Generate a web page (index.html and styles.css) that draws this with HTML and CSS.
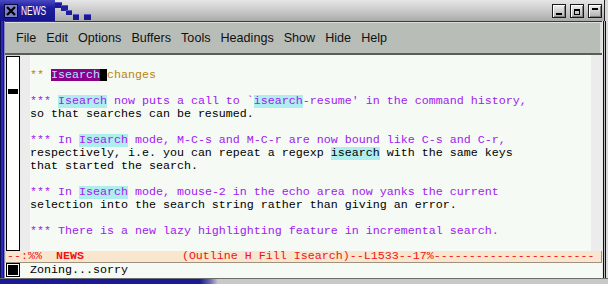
FILE: index.html
```html
<!DOCTYPE html>
<html lang="en">
<head>
    <meta charset="UTF-8">
    <title>NEWS - Emacs</title>
    <link rel="stylesheet" href="styles.css">
</head>
<body>
    <div class="window">
        <div class="titlebar">
            <div class="title-tab">
                <svg class="win-icon" width="14" height="14" viewBox="0 0 14 14">
                    <rect x="0.5" y="0.5" width="13" height="13" fill="#7c82c8" stroke="#0a0a40"/>
                    <path d="M3 3 L11 11 M11 3 L3 11" stroke="#000" stroke-width="2.2"/>
                </svg>
                <span class="title">NEWS</span>
            </div>
            <svg class="steps" width="40" height="21" viewBox="0 0 40 21">
                <rect x="0" y="2" width="7" height="6" fill="#1c1c9a"/>
                <rect x="6" y="5" width="7" height="6" fill="#22229e"/>
                <rect x="11" y="10" width="6" height="5" fill="#1c1c96"/>
                <rect x="18" y="14" width="6" height="6" fill="#1a1a90"/>
                <rect x="29" y="14" width="7" height="6" fill="#1a1a90"/>
                <rect x="0" y="2" width="7" height="1" fill="#5858c8"/>
                <rect x="6" y="5" width="7" height="1" fill="#5858c8"/>
                <rect x="11" y="10" width="6" height="1" fill="#5858c8"/>
                <rect x="18" y="14" width="6" height="1" fill="#5858c8"/>
                <rect x="29" y="14" width="7" height="1" fill="#5858c8"/>
            </svg>
            <div class="title-fill"></div>
            <div class="wbtns">
                <span class="wbtn"><span class="ico-min"></span></span>
                <span class="wbtn"><span class="ico-max"></span></span>
                <span class="wbtn"><span class="ico-shade"></span></span>
            </div>
        </div>
        <div class="frame">
            <div class="frame-left"></div>
            <div class="frame-body">
                <div class="menubar">
                    <span>File</span>
                    <span>Edit</span>
                    <span>Options</span>
                    <span>Buffers</span>
                    <span>Tools</span>
                    <span>Headings</span>
                    <span>Show</span>
                    <span>Hide</span>
                    <span>Help</span>
                </div>
                <div class="editor">
                    <div class="scrollbar"><div class="thumb"></div></div>
                    <div class="fringe"></div>
                    <div class="buffer">
                        <div class="ln"> </div>
                        <div class="ln h">** <span class="isr">Isearch</span><span class="cur"> </span>changes</div>
                        <div class="ln"> </div>
                        <div class="ln p">*** <span class="lz">Isearch</span> now puts a call to `<span class="lz">isearch</span>-resume' in the command history,</div>
                        <div class="ln">so that searches can be resumed.</div>
                        <div class="ln"> </div>
                        <div class="ln p">*** In <span class="lz">Isearch</span> mode, M-C-s and M-C-r are now bound like C-s and C-r,</div>
                        <div class="ln">respectively, i.e. you can repeat a regexp <span class="lz">isearch</span> with the same keys</div>
                        <div class="ln">that started the search.</div>
                        <div class="ln"> </div>
                        <div class="ln p">*** In <span class="lz">Isearch</span> mode, mouse-2 in the echo area now yanks the current</div>
                        <div class="ln">selection into the search string rather than giving an error.</div>
                        <div class="ln"> </div>
                        <div class="ln p">*** There is a new lazy highlighting feature in incremental search.</div>
                    </div>
                    <div class="fringe fringe-right"></div>
                </div>
                <div class="modeline">--:%%  <b>NEWS</b>              (Outline H Fill Isearch)--L1533--17%-----------------------</div>
                <div class="minibuf">
                    <div class="mbox"><div class="mbox-fill"></div></div>
                    <div class="mtext">Zoning...sorry</div>
                </div>
            </div>
            <div class="frame-right"></div>
        </div>
        <div class="frame-bottom"></div>
    </div>
</body>
</html>
```

FILE: styles.css
```css
body {
    margin: 0;
    background: #e0e0e0;
    overflow: hidden;
}
.window {
    width: 608px;
    height: 284px;
    display: flex;
    flex-direction: column;
}

/* title bar */
.titlebar {
    height: 21px;
    flex-shrink: 0;
    display: flex;
    background: linear-gradient(#e6e6e6, #c4c4c4 60%, #aaaaaa);
    box-shadow: inset -3px 0 0 #d8d8d8, inset -4px 0 0 #202020;
}
.title-tab {
    width: 55px;
    flex-shrink: 0;
    display: flex;
    align-items: center;
    background: linear-gradient(#4a4ac4, #1e1ea2 35%, #14148a);
}
.win-icon {
    margin-left: 4px;
    flex-shrink: 0;
}
.title {
    display: inline-block;
    margin-left: 3px;
    color: #fff;
    font-family: "Liberation Sans", sans-serif;
    font-size: 12px;
    transform: scaleX(0.7);
    transform-origin: left center;
}
.steps {
    flex-shrink: 0;
}
.title-fill {
    flex: 1;
}
.wbtns {
    display: flex;
    gap: 4px;
    padding: 4px 6px 0 0;
}
.wbtn {
    width: 12px;
    height: 12px;
    border: 1px solid #1a1a1a;
    background: linear-gradient(#f0f0f0, #b0b0b0);
    box-shadow: inset 1px 1px 0 #fff, inset -1px -1px 0 #808080;
    position: relative;
}
.ico-min {
    position: absolute;
    left: 3px;
    top: 8px;
    width: 6px;
    height: 2px;
    background: #000;
}
.ico-max {
    position: absolute;
    left: 3px;
    top: 4px;
    width: 4px;
    height: 3px;
    border: 1px solid #000;
    border-top-width: 2px;
}
.ico-shade {
    position: absolute;
    left: 3px;
    top: 3px;
    width: 6px;
    height: 2px;
    background: #000;
}

/* frame */
.frame {
    flex: 1;
    min-height: 0;
    display: flex;
}
.frame-left {
    width: 5px;
    flex-shrink: 0;
    background: linear-gradient(to right, #0c0c50 0 1px, #2a2ac0 1px 3px, #14148a 3px 4px, #8888b8 4px);
}
.frame-right {
    width: 6px;
    flex-shrink: 0;
    background: linear-gradient(to right, #e8e8e8 0 1px, #111 1px 2px, #bdbdbd 2px 3px, #111 3px 4px, #dcdcdc 4px);
}
.frame-body {
    flex: 1;
    min-width: 0;
    display: flex;
    flex-direction: column;
    background: #d6d6d6;
}
.frame-bottom {
    height: 5px;
    flex-shrink: 0;
    border-top: 1px solid #6c6c6c;
    background: linear-gradient(to right, #1a1a96 0, #1a1a96 200px, #6a6ab0 210px, #c8c8c8 218px);
}

/* menu bar */
.menubar {
    height: 31px;
    flex-shrink: 0;
    display: flex;
    align-items: center;
    gap: 10px;
    padding-left: 11px;
    background: #b9bdb8;
    border-top: 1px solid #3a3a3a;
    border-bottom: 2px solid #5a5c5a;
    box-shadow: inset 0 1px 0 #dcdedc, inset -2px 0 0 #dcdedc;
    font-family: "Liberation Sans", sans-serif;
    font-size: 12.6px;
    color: #111;
}

/* editor window */
.editor {
    height: 196px;
    flex-shrink: 0;
    display: flex;
    padding-left: 1px;
}
.scrollbar {
    width: 12px;
    margin-top: 1px;
    height: 193px;
    border: 1px solid #000;
    background: #fff;
    flex-shrink: 0;
}
.thumb {
    width: 10px;
    height: 5px;
    margin: 32px 0 0 1px;
    background: #000;
}
.fringe {
    width: 10px;
    background: #ececec;
    flex-shrink: 0;
}
.fringe-right {
    width: 11px;
}
.buffer {
    flex: 1;
    min-width: 0;
    background: #f5faf5;
    padding-top: 1px;
    overflow: hidden;
    font-family: "Liberation Mono", monospace;
    font-size: 11.67px;
    color: #000;
}
.ln {
    height: 13px;
    line-height: 13px;
    white-space: pre;
}
.h {
    color: #b8860b;
}
.p {
    color: #a020f0;
}
.isr {
    display: inline-block;
    height: 12px;
    background: #8b008b;
    color: #b0e2ff;
}
.cur {
    display: inline-block;
    height: 12px;
    background: #000;
}
.lz {
    display: inline-block;
    height: 13px;
    background: #afeeee;
}

/* mode line */
.modeline {
    height: 12px;
    flex-shrink: 0;
    box-sizing: border-box;
    line-height: 11px;
    margin-left: 1px;
    padding-left: 1px;
    background: #f8e6cf;
    border-bottom: 1px solid #a09080;
    border-right: 1px solid #a09080;
    white-space: pre;
    font-family: "Liberation Mono", monospace;
    font-size: 11.67px;
    color: #f01414;
}
.modeline b {
    font-weight: bold;
}

/* minibuffer */
.minibuf {
    height: 15px;
    flex-shrink: 0;
    display: flex;
    padding-left: 1px;
    background: #f5faf5;
}
.mbox {
    width: 12px;
    height: 12px;
    border: 1px solid #000;
    background: #fff;
    flex-shrink: 0;
}
.mbox-fill {
    width: 10px;
    height: 10px;
    margin: 1px;
    background: #000;
}
.mtext {
    margin-left: 10px;
    line-height: 14px;
    font-family: "Liberation Mono", monospace;
    font-size: 11.67px;
    color: #000;
    white-space: pre;
}
```
